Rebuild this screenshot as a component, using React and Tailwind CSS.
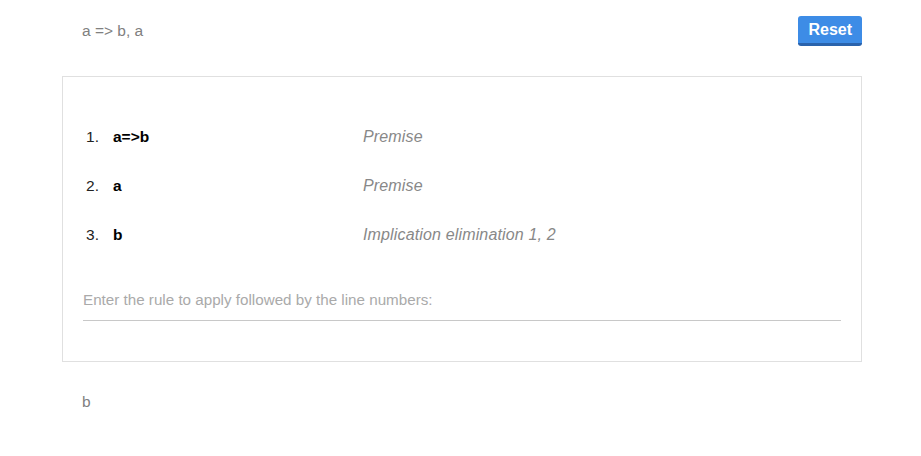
import React from 'react';

const lines = [
  { n: 1, formula: 'a=>b', rule: 'Premise' },
  { n: 2, formula: 'a', rule: 'Premise' },
  { n: 3, formula: 'b', rule: 'Implication elimination 1, 2' },
];

const App = () => {
  return (
    <div className="min-h-screen bg-white font-['Liberation_Sans',Arial,sans-serif] text-[15.5px]">
      <div className="w-[800px] ml-[62px] pt-[16px]">
        {/* Header */}
        <div className="flex items-start justify-between">
          <div className="pl-[20px] pt-[4px] text-[#808080] leading-[22px]">a =&gt; b, a</div>
          <button className="h-[30px] px-[10px] rounded-[3px] bg-[#3d8ce6] border-b-[3px] border-[#2a63ac] text-white font-bold text-[16px] leading-none">
            Reset
          </button>
        </div>

        {/* Proof box */}
        <div className="mt-[30px] border border-[#e0e0e0] px-[20px] pt-[51px] pb-[40px]">
          <ol className="flex flex-col gap-[31px]">
            {lines.map((line) => (
              <li key={line.n} className="flex items-center h-[18px]">
                <span className="w-[30px] pl-[3px] text-[#222]">{line.n}.</span>
                <span className="w-[250px] font-bold text-black">{line.formula}</span>
                <span className="italic text-[16px] tracking-[0.15px] text-[#888]">{line.rule}</span>
              </li>
            ))}
          </ol>
          <div className="mt-[44px] border-b border-[#c8c8c8] pb-[8px]">
            <input
              className="w-full outline-none text-[15.2px] placeholder:text-[#aaa] text-[#333]"
              placeholder="Enter the rule to apply followed by the line numbers:"
            />
          </div>
        </div>

        {/* Result */}
        <div className="pl-[20px] mt-[28px] text-[#808080]">b</div>
      </div>
    </div>
  );
};

export default App;
